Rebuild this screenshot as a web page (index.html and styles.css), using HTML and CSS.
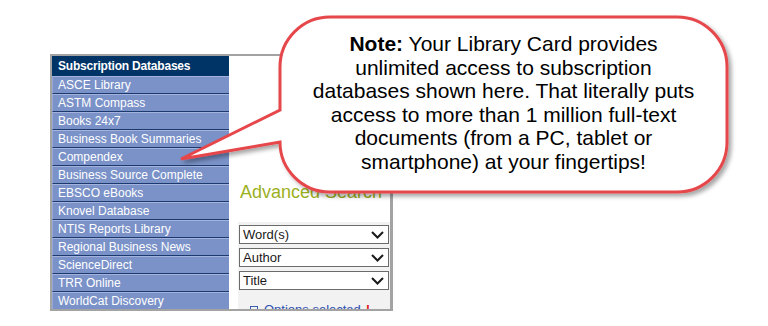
FILE: index.html
```html
<!DOCTYPE html>
<html lang="en">
<head>
<meta charset="utf-8">
<title>Subscription Databases</title>
<link rel="stylesheet" href="styles.css">
</head>
<body>
<div class="page">
  <div class="frame">
    <nav class="sidebar">
      <div class="sb-head">Subscription Databases</div>
      <div class="sb-item">ASCE Library</div>
      <div class="sb-item">ASTM Compass</div>
      <div class="sb-item">Books 24x7</div>
      <div class="sb-item">Business Book Summaries</div>
      <div class="sb-item">Compendex</div>
      <div class="sb-item">Business Source Complete</div>
      <div class="sb-item">EBSCO eBooks</div>
      <div class="sb-item">Knovel Database</div>
      <div class="sb-item">NTIS Reports Library</div>
      <div class="sb-item">Regional Business News</div>
      <div class="sb-item">ScienceDirect</div>
      <div class="sb-item">TRR Online</div>
      <div class="sb-item">WorldCat Discovery</div>
    </nav>
    <main class="panel">
      <h2 class="adv-title">Advanced Search</h2>
      <div class="form-area">
        <div class="sel"><span>Word(s)</span><svg class="chev" width="13" height="8" viewBox="0 0 13 8"><path d="M1 1 L6.5 6.5 L12 1" fill="none" stroke="#1a1a1a" stroke-width="2"/></svg></div>
        <div class="sel"><span>Author</span><svg class="chev" width="13" height="8" viewBox="0 0 13 8"><path d="M1 1 L6.5 6.5 L12 1" fill="none" stroke="#1a1a1a" stroke-width="2"/></svg></div>
        <div class="sel"><span>Title</span><svg class="chev" width="13" height="8" viewBox="0 0 13 8"><path d="M1 1 L6.5 6.5 L12 1" fill="none" stroke="#1a1a1a" stroke-width="2"/></svg></div>
        <div class="options"><span class="opt-box"></span><a class="opt-link">Options selected</a><span class="bang">!</span></div>
      </div>
    </main>
  </div>

  <svg class="callout-shape" width="768" height="326" viewBox="0 0 768 326">
    <defs>
      <filter id="sh" x="-10%" y="-10%" width="130%" height="130%">
        <feDropShadow dx="3" dy="3" stdDeviation="2" flood-color="#000" flood-opacity="0.35"/>
      </filter>
    </defs>
    <path d="M330 17 H677 A50 50 0 0 1 727 67 V142 A50 50 0 0 1 677 192 H330 A50 50 0 0 1 280 142 L181 159 L280 110 V67 A50 50 0 0 1 330 17 Z" fill="#fff" stroke="#e5474b" stroke-width="3" stroke-linejoin="miter" filter="url(#sh)"/>
  </svg>
  <div class="callout-text">
    <b>Note:</b> Your Library Card provides<br>
    unlimited access to subscription<br>
    databases shown here. That literally puts<br>
    access to more than 1 million full-text<br>
    documents (from a PC, tablet or<br>
    smartphone) at your fingertips!
  </div>
</div>
</body>
</html>
```

FILE: styles.css
```css
html, body {
  margin: 0;
  padding: 0;
  background: #fff;
}

.page {
  position: relative;
  width: 768px;
  height: 326px;
  overflow: hidden;
  font-family: "Liberation Sans", Arial, sans-serif;
}

.frame {
  margin: 54px 0 0 50px;
  width: 338px;
  height: 253px;
  border-top: 2px solid #a3a3a3;
  border-left: 2px solid #a3a3a3;
  border-right: 3px solid #a3a3a3;
  border-bottom: 2px solid #a3a3a3;
  display: flex;
  overflow: hidden;
  background: #fff;
}

.sidebar {
  width: 177px;
  flex: none;
  display: flex;
  flex-direction: column;
}

.sb-head {
  height: 20px;
  line-height: 21px;
  background: #003366;
  color: #fff;
  font-weight: bold;
  font-size: 12px;
  padding-left: 6px;
  letter-spacing: -0.2px;
  flex: none;
}

.sb-item {
  height: 16px;
  line-height: 17px;
  flex: none;
  background: #7a92c8;
  border-top: 1px solid #a3b3dd;
  border-bottom: 1px solid #1d3a6f;
  border-left: 1px solid #95a8d8;
  color: #fff;
  font-size: 12px;
  padding-left: 5px;
  overflow: hidden;
}

.panel {
  flex: 1;
  display: flex;
  flex-direction: column;
}

.adv-title {
  margin: 126px 0 0 11px;
  font-size: 18px;
  line-height: 20px;
  font-weight: normal;
  color: #9cb01e;
}

.form-area {
  margin: 20px 0 0 9px;
  flex: 1;
  background: #f2f2f2;
  padding: 3px 1px 0 1px;
  display: flex;
  flex-direction: column;
  gap: 4px;
}

.sel {
  height: 17px;
  border: 1px solid #6b6b6b;
  background: #fff;
  display: flex;
  align-items: center;
  justify-content: space-between;
  padding: 0 4px 0 3px;
  font-size: 13px;
  color: #1a1a1a;
}

.chev {
  flex: none;
}

.options {
  margin: 8px 0 0 11px;
  display: flex;
  align-items: center;
  font-size: 13px;
  line-height: 15px;
}

.opt-box {
  width: 6px;
  height: 6px;
  border: 1px solid #3a5db0;
  margin-right: 6px;
}

.opt-link {
  color: #2e4fb0;
  text-decoration: underline;
}

.bang {
  color: #e0201e;
  font-weight: bold;
  margin-left: 5px;
}

.callout-shape {
  position: absolute;
  left: 0;
  top: 0;
  pointer-events: none;
}

.callout-text {
  position: absolute;
  left: 280px;
  top: 32px;
  width: 447px;
  text-align: center;
  font-size: 21px;
  line-height: 23.5px;
  color: #000;
}
```
